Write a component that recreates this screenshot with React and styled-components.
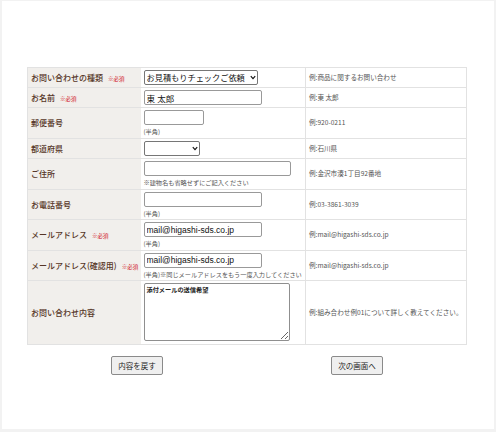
import styled, { createGlobalStyle } from 'styled-components'

const GlobalStyle = createGlobalStyle`
    html, body {
        margin: 0;
        padding: 0;
        background: #f2f2f2;
    }
    body {
        font-family: "Noto Sans CJK JP", "Liberation Sans", sans-serif;
    }
`
const Panel = styled.div`
    margin: 1px 2px 0;
    height: 428px;
    background: #fff;
    padding: 66px 0 0 25px;
    box-sizing: border-box;
`
const FormTable = styled.table`
    width: 440px;
    border-collapse: collapse;
    table-layout: fixed;
    border: 1px solid #e2e2e2;
    line-height: 1.2;
`
const Row = styled.tr`
    height: ${p => p.$h}px;
    border-bottom: 1px solid #e2e2e2;
`
const Label = styled.th`
    width: 113px;
    background: #f1efec;
    color: #553526;
    font-size: 8px;
    font-weight: 500;
    text-align: left;
    padding: 0 0 0 3px;
    box-sizing: border-box;
    vertical-align: middle;
    white-space: nowrap;
`
const Required = styled.span`
    color: #d0101a;
    font-size: 5.5px;
    font-weight: normal;
    margin-left: 5px;
`
const Field = styled.td`
    width: 165px;
    padding: 2px 3px;
    vertical-align: ${p => (p.$top ? 'top' : 'middle')};
    border-right: 1px solid #e2e2e2;
    box-sizing: border-box;
`
const Example = styled.td`
    color: #555;
    font-size: 6.6px;
    padding: 0 0 0 3px;
    vertical-align: middle;
`
const TextInput = styled.input`
    display: block;
    width: ${p => p.$w}px;
    height: 15px;
    box-sizing: border-box;
    border: 1px solid #999;
    border-radius: 2px;
    padding: 0 2px;
    margin: 0;
    font-family: "Liberation Sans", "Noto Sans CJK JP", sans-serif;
    font-size: 8.5px;
    color: #111;
    background: #fff;
`
const SelectWrap = styled.div`
    position: relative;
    width: ${p => p.$w}px;
    height: 15px;
`
const Select = styled.select`
    appearance: none;
    display: block;
    width: 100%;
    height: 15px;
    box-sizing: border-box;
    border: 1px solid #767676;
    border-radius: 2px;
    padding: 0 7px 0 2px;
    margin: 0;
    font-family: "Noto Sans CJK JP", sans-serif;
    font-size: 8.2px;
    line-height: 13px;
    color: #111;
    background: #fff;
`
const Chevron = styled.svg`
    position: absolute;
    right: 2px;
    top: 5px;
    width: 6px;
    height: 5px;
    pointer-events: none;
`
const Note = styled.div`
    font-size: 6.2px;
    color: #555;
    margin-top: 3px;
    white-space: nowrap;
`
const TextArea = styled.textarea`
    display: block;
    width: 146px;
    height: 58px;
    box-sizing: border-box;
    border: 1px solid #8f8f8f;
    border-radius: 2px;
    padding: 1px 2px;
    margin: 0;
    font-family: "Noto Sans CJK JP", sans-serif;
    font-size: 6.2px;
    font-weight: bold;
    color: #222;
    resize: both;
`
const Buttons = styled.div`
    display: flex;
    width: 440px;
    margin-top: 11px;
`
const Half = styled.div`
    flex: 1;
    display: flex;
    justify-content: center;
`
const Button = styled.button`
    width: 52px;
    height: 19px;
    box-sizing: border-box;
    border: 1px solid #8a8a8a;
    border-radius: 2px;
    background: #efefef;
    font-family: "Noto Sans CJK JP", sans-serif;
    font-size: 7.5px;
    color: #222;
    padding: 0;
`

const prefectures = ['', '北海道', '青森県', '石川県', '東京都', '大阪府']

function Dropdown({ width, value, options }) {
    return (
        <SelectWrap $w={width}>
            <Select defaultValue={value}>
                {options.map(o => <option key={o}>{o}</option>)}
            </Select>
            <Chevron viewBox="0 0 6 5">
                <path d="M0.8 1.2 L3 3.6 L5.2 1.2" fill="none" stroke="#111" strokeWidth="1.2" />
            </Chevron>
        </SelectWrap>
    )
}

export default function App() {
    return (
        <>
            <GlobalStyle />
            <Panel>
                <form>
                    <FormTable>
                        <tbody>
                            <Row $h={19}>
                                <Label>お問い合わせの種類<Required>※必須</Required></Label>
                                <Field>
                                    <Dropdown width={114} value="お見積もりチェックご依頼"
                                        options={['お見積もりチェックご依頼', '商品に関するお問い合わせ']} />
                                </Field>
                                <Example>例:商品に関するお問い合わせ</Example>
                            </Row>
                            <Row $h={17}>
                                <Label>お名前<Required>※必須</Required></Label>
                                <Field>
                                    <TextInput $w={118} defaultValue="東 太郎" />
                                </Field>
                                <Example>例:東 太郎</Example>
                            </Row>
                            <Row $h={31}>
                                <Label>郵便番号</Label>
                                <Field>
                                    <TextInput $w={60} />
                                    <Note>(半角)</Note>
                                </Field>
                                <Example>例:920-0211</Example>
                            </Row>
                            <Row $h={18}>
                                <Label>都道府県</Label>
                                <Field>
                                    <Dropdown width={56} value="" options={prefectures} />
                                </Field>
                                <Example>例:石川県</Example>
                            </Row>
                            <Row $h={31}>
                                <Label>ご住所</Label>
                                <Field>
                                    <TextInput $w={147} />
                                    <Note>※建物名も省略せずにご記入ください</Note>
                                </Field>
                                <Example>例:金沢市湊1丁目92番地</Example>
                            </Row>
                            <Row $h={28}>
                                <Label>お電話番号</Label>
                                <Field>
                                    <TextInput $w={118} />
                                    <Note>(半角)</Note>
                                </Field>
                                <Example>例:03-3861-3039</Example>
                            </Row>
                            <Row $h={30}>
                                <Label>メールアドレス<Required>※必須</Required></Label>
                                <Field>
                                    <TextInput $w={118} defaultValue="mail@higashi-sds.co.jp" />
                                    <Note>(半角)</Note>
                                </Field>
                                <Example>例:mail@higashi-sds.co.jp</Example>
                            </Row>
                            <Row $h={30}>
                                <Label>メールアドレス(確認用)<Required>※必須</Required></Label>
                                <Field>
                                    <TextInput $w={118} defaultValue="mail@higashi-sds.co.jp" />
                                    <Note>(半角)※同じメールアドレスをもう一度入力してください</Note>
                                </Field>
                                <Example>例:mail@higashi-sds.co.jp</Example>
                            </Row>
                            <Row $h={64}>
                                <Label>お問い合わせ内容</Label>
                                <Field $top>
                                    <TextArea defaultValue="添付メールの送信希望" />
                                </Field>
                                <Example>例:組み合わせ例01について詳しく教えてください。</Example>
                            </Row>
                        </tbody>
                    </FormTable>
                    <Buttons>
                        <Half><Button type="button">内容を戻す</Button></Half>
                        <Half><Button type="button">次の画面へ</Button></Half>
                    </Buttons>
                </form>
            </Panel>
        </>
    )
}
